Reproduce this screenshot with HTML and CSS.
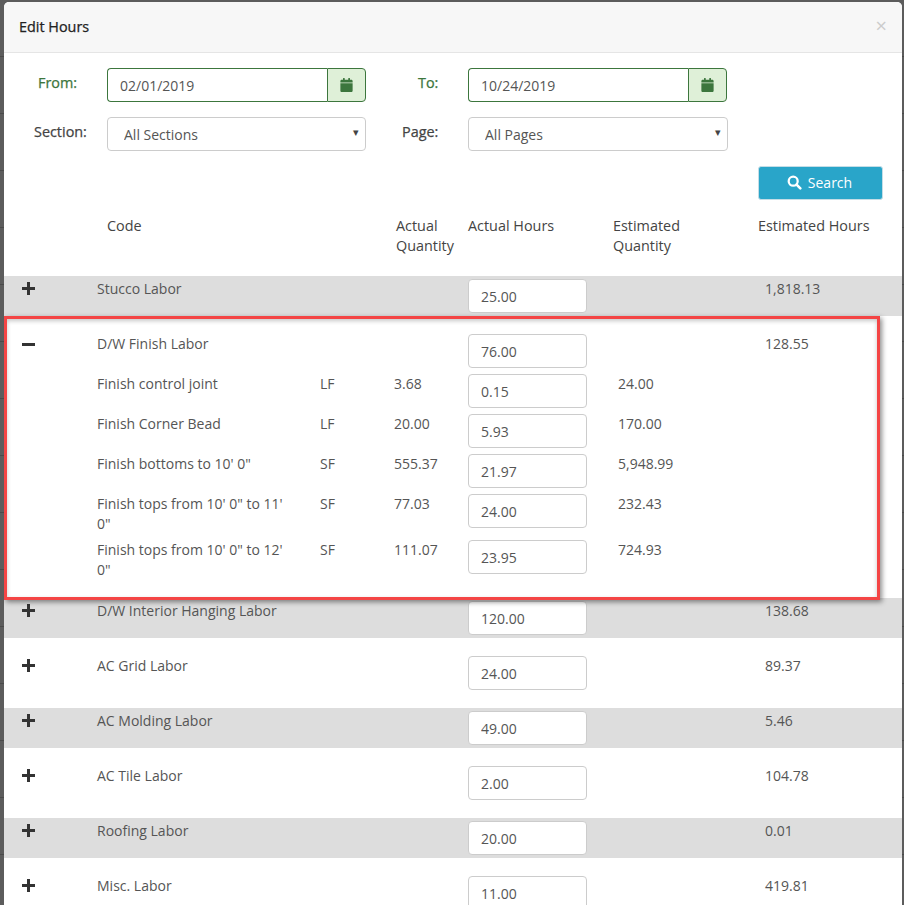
FILE: index.html
```html
<!DOCTYPE html>
<html lang="en">
<head>
<meta charset="utf-8">
<title>Edit Hours</title>
<link rel="stylesheet" href="styles.css">
</head>
<body>
<svg class="defs" width="0" height="0" aria-hidden="true">
  <symbol id="cal" viewBox="0 0 448 512"><path d="M0 464c0 26.500 21.500 48 48 48h352c26.500 0 48-21.500 48-48V192H0v272zM400 64h-48V16c0-8.800-7.200-16-16-16h-32c-8.800 0-16 7.200-16 16v48H160V16c0-8.800-7.200-16-16-16h-32c-8.800 0-16 7.200-16 16v48H48C21.500 64 0 85.500 0 112v48h448v-48c0-26.500-21.500-48-48-48z"/></symbol>
  <symbol id="plus" viewBox="0 0 13 13"><path d="M5 0h3v5h5v3H8v5H5V8H0V5h5z"/></symbol>
  <symbol id="minus" viewBox="0 0 13 3"><path d="M0 0h13v3H0z"/></symbol>
</svg>
<div class="modal">
  <header class="modal-head">
    <h1 class="modal-title">Edit Hours</h1>
    <span class="close">×</span>
  </header>
  <section class="filters">
    <label class="flabel flabel-ok from">From:</label>
    <div class="date"><input class="date-input" value="02/01/2019"><span class="addon"><svg class="cal"><use href="#cal"/></svg></span></div>
    <label class="flabel flabel-ok to">To:</label>
    <div class="date date-to"><input class="date-input" value="10/24/2019"><span class="addon"><svg class="cal"><use href="#cal"/></svg></span></div>
    <label class="flabel section">Section:</label>
    <div class="sel"><select class="sel-input"><option>All Sections</option></select></div>
    <label class="flabel page">Page:</label>
    <div class="sel sel-wide"><select class="sel-input"><option>All Pages</option></select></div>
  </section>
  <div class="search-row">
    <button class="search"><svg class="search-ic" viewBox="0 0 16 16"><circle cx="6.600" cy="6.600" r="4.800" fill="none" stroke="#fff" stroke-width="2.400"/><path d="M10.200 10.200l4 4" stroke="#fff" stroke-width="2.800" stroke-linecap="round"/></svg>Search</button>
  </div>
  <div class="thead">
    <div class="th-code">Code</div>
    <div class="th-aq">Actual Quantity</div>
    <div class="th-ah">Actual Hours</div>
    <div class="th-eq">Estimated Quantity</div>
    <div class="th-eh">Estimated Hours</div>
  </div>
  <div class="body">
    <div class="group striped">
      <div class="row"><svg class="tog"><use href="#plus"/></svg><div>Stucco Labor</div><div></div><div></div><input class="hours" value="25.00"><div></div><div>1,818.13</div></div>
    </div>
    <div class="group open">
      <div class="row"><svg class="tog tog-minus"><use href="#minus"/></svg><div>D/W Finish Labor</div><div></div><div></div><input class="hours" value="76.00"><div></div><div>128.55</div></div>
      <div class="row"><i></i><div class="name">Finish control joint</div><div>LF</div><div>3.68</div><input class="hours" value="0.15"><div>24.00</div><div></div></div>
      <div class="row"><i></i><div class="name">Finish Corner Bead</div><div>LF</div><div>20.00</div><input class="hours" value="5.93"><div>170.00</div><div></div></div>
      <div class="row"><i></i><div class="name">Finish bottoms to 10' 0"</div><div>SF</div><div>555.37</div><input class="hours" value="21.97"><div>5,948.99</div><div></div></div>
      <div class="row"><i></i><div class="name">Finish tops from 10' 0" to 11' 0"</div><div>SF</div><div>77.03</div><input class="hours" value="24.00"><div>232.43</div><div></div></div>
      <div class="row"><i></i><div class="name">Finish tops from 10' 0" to 12' 0"</div><div>SF</div><div>111.07</div><input class="hours" value="23.95"><div>724.93</div><div></div></div>
    </div>
    <div class="group striped">
      <div class="row"><svg class="tog"><use href="#plus"/></svg><div>D/W Interior Hanging Labor</div><div></div><div></div><input class="hours" value="120.00"><div></div><div>138.68</div></div>
    </div>
    <div class="group plain">
      <div class="row"><svg class="tog"><use href="#plus"/></svg><div>AC Grid Labor</div><div></div><div></div><input class="hours" value="24.00"><div></div><div>89.37</div></div>
    </div>
    <div class="group striped">
      <div class="row"><svg class="tog"><use href="#plus"/></svg><div>AC Molding Labor</div><div></div><div></div><input class="hours" value="49.00"><div></div><div>5.46</div></div>
    </div>
    <div class="group plain">
      <div class="row"><svg class="tog"><use href="#plus"/></svg><div>AC Tile Labor</div><div></div><div></div><input class="hours" value="2.00"><div></div><div>104.78</div></div>
    </div>
    <div class="group striped">
      <div class="row"><svg class="tog"><use href="#plus"/></svg><div>Roofing Labor</div><div></div><div></div><input class="hours" value="20.00"><div></div><div>0.01</div></div>
    </div>
    <div class="group plain">
      <div class="row"><svg class="tog"><use href="#plus"/></svg><div>Misc. Labor</div><div></div><div></div><input class="hours" value="11.00"><div></div><div>419.81</div></div>
    </div>
  </div>
  <div class="highlight"></div>
</div>
</body>
</html>
```
FILE: styles.css
```css
* { box-sizing: border-box; }
html, body { margin: 0; height: 905px; overflow: hidden; }
body {
  position: relative;
  background: repeating-linear-gradient(#5c5c5c 0, #5c5c5c 56px, #4a4a4a 56px, #4a4a4a 57px);
  font-family: "Open Sans", sans-serif;
  font-size: 14px;
  line-height: 20px;
  color: #555;
  padding: 2px 2px 0 4px;
}
.defs { position: absolute; }
.modal {
  position: relative;
  background: #fff;
  height: 1000px;
  border-radius: 5px 5px 0 0;
  overflow: hidden;
}
.modal-head {
  height: 51px;
  background: #f7f7f7;
  border-bottom: 1px solid #e5e5e5;
  display: flex;
  justify-content: space-between;
  padding: 15px 15px 0 15px;
}
.modal-title { margin: 0; font-size: 14.4px; font-weight: 400; line-height: 20px; color: #222; -webkit-text-stroke: .25px #222; }
.close { color: #ccc; font-size: 20px; line-height: 18px; font-weight: 400; }
.filters {
  display: grid;
  grid-template-columns: 103px 259px 102px 260px;
  grid-auto-rows: 34px;
  row-gap: 15px;
  padding-top: 15px;
}
.flabel { font-size: 14.4px; font-weight: 400; color: #444; padding-top: 5px; -webkit-text-stroke: .25px; }
.flabel-ok { color: #3c763d; }
.from { padding-left: 34px; }
.to { padding-left: 52px; }
.section { padding-left: 30px; }
.page { padding-left: 36px; }
.date { display: flex; height: 34px; }
.date-to { width: 259px; }
.date-input {
  flex: 1;
  min-width: 0;
  height: 34px;
  border: 1px solid #3c763d;
  border-right: 0;
  border-radius: 4px 0 0 4px;
  padding: 0 12px;
  font: 14px "Open Sans", sans-serif;
  color: #555;
  outline: 0;
}
.addon {
  width: 39px;
  background: #dff0d8;
  border: 1px solid #3c763d;
  border-radius: 0 4px 4px 0;
  display: flex;
  align-items: center;
  justify-content: center;
}
.cal { width: 13px; height: 14px; fill: #3c763d; }
.sel { position: relative; height: 34px; }
.sel::after {
  content: "▾";
  position: absolute;
  right: 7px;
  top: 5px;
  font-size: 11px;
  color: #444;
  pointer-events: none;
}
.sel-input {
  width: 100%;
  height: 34px;
  appearance: none;
  background: #fff;
  border: 1px solid #ccc;
  border-radius: 4px;
  padding: 0 12px 0 16px;
  font: 14px "Open Sans", sans-serif;
  color: #555;
  outline: 0;
}
.search-row { display: flex; justify-content: flex-end; padding: 15px 19px 0 0; }
.search {
  width: 125px;
  height: 34px;
  background: #29a5c9;
  border: 1px solid #c4dde6;
  border-radius: 3px;
  color: #fff;
  font: 14px "Open Sans", sans-serif;
  display: flex;
  align-items: center;
  justify-content: center;
  gap: 6px;
  padding: 0 2px 2px 0;
}
.search-ic { width: 15px; height: 15px; }
.thead {
  display: grid;
  grid-template-columns: 103px 289px 72px 145px 145px 1fr;
  padding-top: 16px;
  height: 76px;
  font-size: 14.4px;
  color: #444;
}
.th-code { grid-column: 2; }
.th-aq { width: 64px; }
.th-eq { width: 80px; }
.th-eh { white-space: nowrap; }
.group { display: flex; flex-direction: column; gap: 6px; }
.striped { background: #ddd; height: 40px; padding-top: 3px; }
.plain { height: 70px; padding-top: 18px; }
.open { height: 282px; padding-top: 18px; }
.row {
  display: grid;
  grid-template-columns: 75px 223px 74px 74px 150px 147px 1fr;
  padding-left: 18px;
  align-items: start;
}
.name { padding-right: 28px; }
.tog { width: 13px; height: 13px; margin-top: 3px; fill: #333; }
.tog-minus { height: 3px; margin-top: 9px; }
.hours {
  width: 119px;
  height: 34px;
  border: 1px solid #ccc;
  border-radius: 4px;
  padding: 0 12px;
  font: 14px "Open Sans", sans-serif;
  color: #555;
  outline: 0;
  background: #fff;
}
.highlight {
  position: absolute;
  left: 0;
  top: 314px;
  width: 876px;
  height: 284px;
  border: 3px solid #f44545;
  box-shadow: 2px 2px 5px rgba(0, 0, 0, .45), inset 0 2px 4px rgba(0, 0, 0, .22);
  pointer-events: none;
}
```
